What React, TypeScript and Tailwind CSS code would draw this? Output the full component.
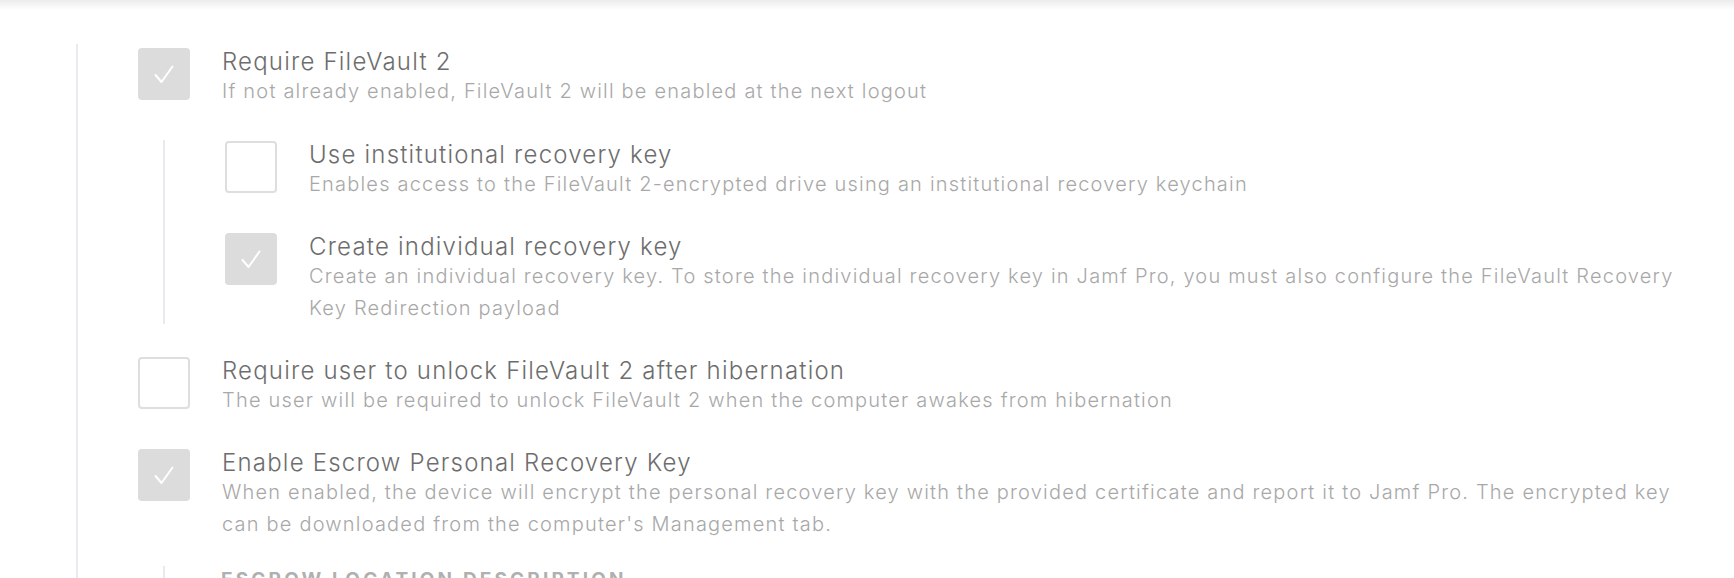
import React from "react";

const font = { fontFamily: '"Inter", "Open Sans", sans-serif' };

function Check({ checked }: { checked: boolean }) {
  if (checked) {
    return (
      <div className="w-[52px] h-[52px] shrink-0 rounded-[4px] bg-[#dcdcdc] flex items-center justify-center">
        <svg width="52" height="52" viewBox="0 0 52 52" fill="none">
          <path d="M17.5 27 L23.5 34 L34.5 18.5" stroke="#ffffff" strokeWidth="2" strokeLinecap="round" strokeLinejoin="round" />
        </svg>
      </div>
    );
  }
  return <div className="w-[52px] h-[52px] shrink-0 rounded-[4px] border-2 border-[#dedede] bg-white" />;
}

function Row({ checked, title, desc }: { checked: boolean; title: string; desc: string }) {
  return (
    <div className="flex items-start gap-[32px]">
      <Check checked={checked} />
      <div className="flex flex-col flex-1 min-w-0 pt-[1px]">
        <div className="text-[24px] leading-[26px] font-light tracking-[0.05em] text-[#6d6d6d]">{title}</div>
        <div className="text-[20px] leading-[32px] font-light tracking-[0.06em] text-[#a8a8a8]">{desc}</div>
      </div>
    </div>
  );
}

export default function App() {
  return (
    <div className="w-[1734px] h-[578px] overflow-hidden bg-white" style={font}>
      <div className="h-[10px] bg-gradient-to-b from-[#ececec] to-white" />
      <div className="ml-[76px] mt-[34px] border-l-2 border-[#e8eaf0] pl-[60px] pt-[4px] flex flex-col gap-[33px] w-[1614px]">
        <Row
          checked
          title="Require FileVault 2"
          desc="If not already enabled, FileVault 2 will be enabled at the next logout"
        />
        <div className="ml-[25px] border-l-2 border-[#e8eaf0] pl-[60px] pt-[1px] flex flex-col gap-[33px]">
          <Row
            checked={false}
            title="Use institutional recovery key"
            desc="Enables access to the FileVault 2-encrypted drive using an institutional recovery keychain"
          />
          <Row
            checked
            title="Create individual recovery key"
            desc="Create an individual recovery key. To store the individual recovery key in Jamf Pro, you must also configure the FileVault Recovery Key Redirection payload"
          />
        </div>
        <Row
          checked={false}
          title="Require user to unlock FileVault 2 after hibernation"
          desc="The user will be required to unlock FileVault 2 when the computer awakes from hibernation"
        />
        <Row
          checked
          title="Enable Escrow Personal Recovery Key"
          desc="When enabled, the device will encrypt the personal recovery key with the provided certificate and report it to Jamf Pro. The encrypted key can be downloaded from the computer's Management tab."
        />
        <div className="-mt-[7px] ml-[25px] border-l-2 border-[#e8eaf0] pl-[56px] pt-[3px] h-[60px]">
          <div className="text-[19px] font-bold tracking-[0.166em] text-[#b0b0b0] uppercase leading-[22px]">
            Escrow Location Description
          </div>
        </div>
      </div>
    </div>
  );
}
